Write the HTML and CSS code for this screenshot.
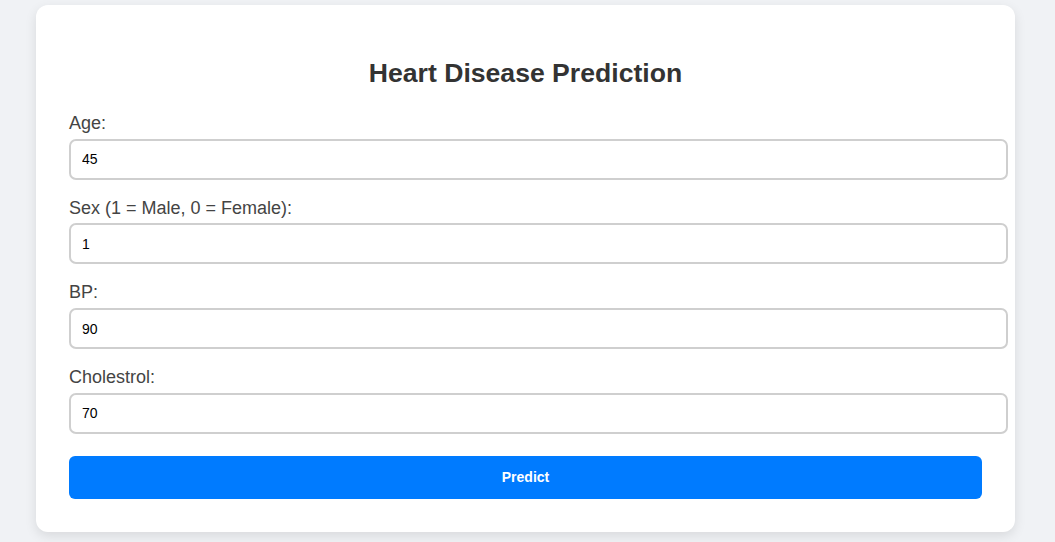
FILE: index.html
```html
<!DOCTYPE html>
<html lang="en">
<head>
<meta charset="utf-8">
<title>Heart Disease Prediction</title>
<link rel="stylesheet" href="styles.css">
</head>
<body>
  <div class="card">
    <h2 class="title">Heart Disease Prediction</h2>
    <form class="form">
      <label class="label" for="age">Age:</label>
      <input class="field" id="age" type="text" value="45">
      <label class="label" for="sex">Sex (1 = Male, 0 = Female):</label>
      <input class="field" id="sex" type="text" value="1">
      <label class="label" for="bp">BP:</label>
      <input class="field" id="bp" type="text" value="90">
      <label class="label" for="chol">Cholestrol:</label>
      <input class="field" id="chol" type="text" value="70">
      <button class="btn" type="button">Predict</button>
    </form>
  </div>
</body>
</html>
```
FILE: styles.css
```css
html, body {
  margin: 0;
  padding: 0;
}
body {
  background: #f0f2f5;
  font-family: "Liberation Sans", Arial, sans-serif;
  padding: 5px 40px 10px 36px;
}
.card {
  background: #fff;
  border-radius: 12px;
  box-shadow: 0 4px 12px rgba(0, 0, 0, 0.1);
  padding: 33px;
}
.title {
  margin: 20px 0 25px;
  text-align: center;
  font-size: 26.6px;
  font-weight: bold;
  color: #333;
  line-height: 30px;
}
.form {
  display: flex;
  flex-direction: column;
  align-items: flex-start;
}
.label {
  display: block;
  font-size: 18px;
  line-height: 20.7px;
  color: #444;
  margin-bottom: 5px;
}
.field {
  box-sizing: content-box;
  width: 100%;
  height: 17px;
  padding: 10px 11px;
  border: 2px solid #cfcfcf;
  border-radius: 7px;
  font-family: "Liberation Sans", Arial, sans-serif;
  font-size: 14px;
  color: #000;
  margin: 0 0 18px;
  outline: none;
  background: #fff;
}
.btn {
  margin-top: 4px;
  width: 100%;
  height: 43px;
  border: none;
  border-radius: 6px;
  background: #007bff;
  color: #fff;
  font-family: "Liberation Sans", Arial, sans-serif;
  font-weight: bold;
  font-size: 14px;
  cursor: pointer;
}
```
